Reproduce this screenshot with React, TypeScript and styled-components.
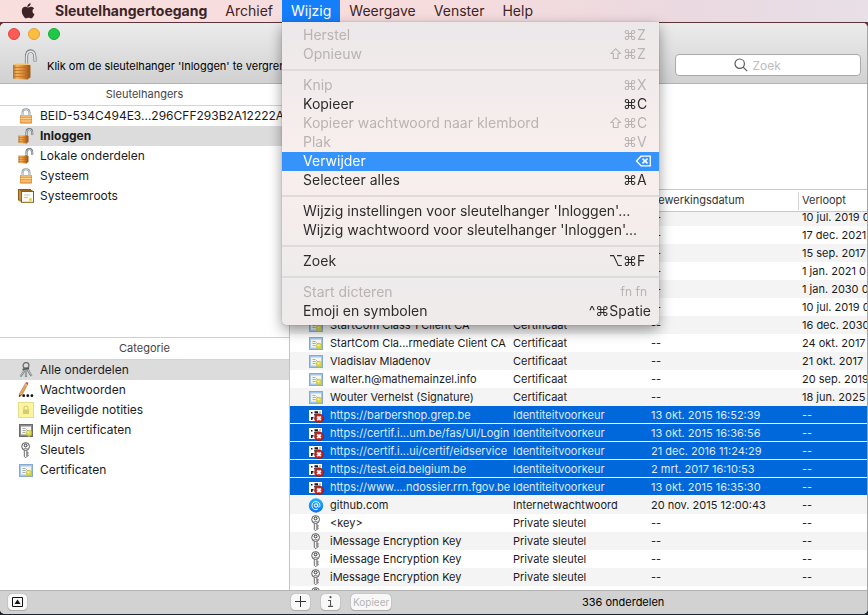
import React, { useLayoutEffect, useRef } from 'react';
import styled, { createGlobalStyle, css } from 'styled-components';

const GlobalStyle = createGlobalStyle`
  * { box-sizing: border-box; }
  html, body, #root { height: 100%; }
  body {
    margin: 0;
    background: linear-gradient(#5e3439, #1c252c);
    font-family: Inter, "Liberation Sans", sans-serif;
    font-size: 12px;
    color: #1b1b1b;
    overflow: hidden;
  }
  button, input { font: inherit; color: inherit; }
`;

/* ---------- layout ---------- */

const Desktop = styled.div`
  display: flex;
  flex-direction: column;
  height: 100%;
`;

const MenuBar = styled.nav`
  display: flex;
  align-items: stretch;
  height: 22px;
  margin-bottom: 1px;
  padding-left: 13px;
  background: linear-gradient(90deg, #f8dfde 0%, #f6dcdd 50%, #ead9e0 80%, #e8dfe7 100%);
  flex: none;
`;

const MenuSlot = styled.div`
  position: relative;
  display: flex;
`;

const MenuTitle = styled.button<{ $active?: boolean; $strong?: boolean }>`
  display: flex;
  align-items: center;
  padding: 0 9px;
  border: 0;
  font-size: 14px;
  line-height: 22px;
  white-space: nowrap;
  font-weight: ${p => (p.$strong ? 700 : 400)};
  color: ${p => (p.$active ? '#fff' : '#3c2427')};
  background: ${p => (p.$active ? '#157efb' : 'transparent')};
`;

const AppleTitle = styled(MenuTitle)`
  padding: 0 11px 1px 8px;
`;

const Menu = styled.div`
  position: absolute;
  z-index: 10;
  top: 22px;
  left: 0;
  width: 377px;
  padding: 4px 0;
  border-radius: 0 0 5px 5px;
  background: linear-gradient(#ece8e9 0%, #f2ebeb 20%, #f8efed 45%, #f5edec 65%, #eeebec 85%, #f0ebea 100%);
  box-shadow: 0 0 1px rgba(0, 0, 0, 0.5), 0 5px 14px rgba(0, 0, 0, 0.4);
`;

const MenuItem = styled.button<{ $selected?: boolean }>`
  display: flex;
  align-items: center;
  width: 100%;
  height: 19px;
  padding: 0 8px 2px 21px;
  border: 0;
  background: ${p => (p.$selected ? '#3693fc' : 'transparent')};
  color: ${p => (p.$selected ? '#fff' : '#2e2c2c')};
  font-size: 14px;
  line-height: 17px;
  white-space: nowrap;
  &:disabled { color: #b9b3b3; }
`;

const MenuLabel = styled.span`
  flex: 1;
  text-align: left;
`;

const Modifiers = styled.span`
  display: flex;
`;

const KeyCap = styled.span<{ $small?: boolean }>`
  display: flex;
  min-width: 14px;
  ${p => p.$small && css`
    font-size: 12px;
    padding-right: 4px;
  `}
`;

const MenuDivider = styled.hr`
  height: 2px;
  margin: 5px 0;
  border: 0;
  background: #e0dbdb;
`;

const Window = styled.main`
  display: flex;
  flex-direction: column;
  flex: 1;
  min-height: 0;
  margin-bottom: 1px;
  border-right: 1px solid #a5a5a5;
  border-radius: 5px;
  overflow: hidden;
  background: #fff;
`;

const TitleBar = styled.header`
  flex: none;
  padding: 5px 6px 0 8px;
  height: 61px;
  background: linear-gradient(#ececec, #d1d1d1);
  border-bottom: 1px solid #b3b3b3;
`;

const Lights = styled.div`
  display: flex;
  gap: 8px;
`;

const Light = styled.button<{ $color: string; $edge: string }>`
  width: 12px;
  height: 12px;
  padding: 0;
  border: 1px solid ${p => p.$edge};
  border-radius: 50%;
  background: ${p => p.$color};
`;

const ToolRow = styled.div`
  display: flex;
  align-items: center;
  height: 34px;
  margin-top: 8px;
`;

const LockButton = styled.button`
  display: flex;
  padding: 0;
  border: 0;
  background: none;
  margin: 0 7px 0 2px;
`;

const LockText = styled.span`
  flex: 1;
  padding-top: 2px;
  white-space: nowrap;
  font-size: 11px;
  color: #000;
`;

const SearchField = styled.label`
  display: flex;
  align-items: center;
  justify-content: center;
  gap: 5px;
  width: 186px;
  height: 22px;
  border: 1px solid #a9a9a9;
  border-radius: 4px;
  background: #fff;
`;

const SearchInput = styled.input`
  width: 50px;
  padding: 0;
  border: 0;
  outline: 0;
  background: none;
  font-size: 12px;
  &::placeholder { color: #bdbdbd; opacity: 1; }
`;

const Content = styled.div`
  display: grid;
  grid-template-columns: 290px minmax(0, 1fr);
  flex: 1;
  min-height: 0;
`;

const Sidebar = styled.aside`
  display: flex;
  flex-direction: column;
  border-right: 1px solid #c4c4c4;
`;

const Section = styled.section<{ $ruled?: boolean }>`
  flex: 1 1 0;
  ${p => p.$ruled && 'border-top: 1px solid #d0d0d0;'}
`;

const SectionTitle = styled.h2`
  margin: 0;
  height: 22px;
  border-bottom: 1px solid #d4d4d4;
  font-size: 11px;
  line-height: 21px;
  font-weight: 400;
  text-align: center;
  color: #444;
`;

const SideItem = styled.button<{ $selected?: boolean; $strong?: boolean }>`
  display: flex;
  align-items: center;
  gap: 6px;
  width: 100%;
  height: 20px;
  padding: 0 0 0 18px;
  border: 0;
  background: ${p => (p.$selected ? '#dcdcdc' : 'transparent')};
  font-size: 12px;
  line-height: 20px;
  font-weight: ${p => (p.$strong ? 700 : 400)};
  white-space: nowrap;
`;

const Main = styled.div`
  display: flex;
  flex-direction: column;
  min-height: 0;
`;

const DetailPane = styled.div`
  flex: none;
  height: 106px;
  border-bottom: 1px solid #c8c8c8;
`;

const ListPane = styled.div`
  flex: 1;
  min-height: 0;
  overflow: hidden;
`;

const Table = styled.table`
  width: 100%;
  table-layout: fixed;
  border-collapse: separate;
  border-spacing: 0;
  font-size: 11px;
`;

const Col = styled.col<{ $w?: number }>`
  ${p => p.$w && `width: ${p.$w}px;`}
`;

const HeadCell = styled.th`
  position: sticky;
  top: 0;
  z-index: 1;
  height: 22px;
  padding: 0 4px 2px;
  border-bottom: 1px solid #c8c8c8;
  background: linear-gradient(#d2d2d2, #d2d2d2) left center / 1px 18px no-repeat #fff;
  font-weight: 400;
  line-height: 18px;
  text-align: left;
  white-space: nowrap;
  color: #333;
`;

const Row = styled.tr<{ $selected?: boolean }>`
  &:nth-child(odd) { background: #f4f4f4; }
  &:nth-child(even) { background: #fff; }
  ${p => p.$selected && css`
    && { background: #0068da; color: #dfeafb; }
    && td { box-shadow: inset 0 -1px #fff; }
  `}
`;

const Cell = styled.td`
  height: 18px;
  padding: 0 4px;
  line-height: 18px;
  white-space: nowrap;
`;

const NameCell = styled(Cell)`
  padding: 0 0 0 18px;
`;

const NameFlex = styled.div`
  display: flex;
  align-items: center;
  gap: 6px;
  height: 18px;
`;

const IconBox = styled.span`
  display: flex;
  flex: none;
  width: 16px;
  height: 16px;
`;

const Footer = styled.footer`
  display: flex;
  align-items: center;
  flex: none;
  height: 24px;
  padding: 0 0 2px 8px;
  background: #d2d2d2;
  border-top: 1px solid #b3b3b3;
`;

const FootLeft = styled.div`
  width: 283px;
`;

const FootGroup = styled.div`
  display: flex;
  gap: 11px;
`;

const FootButton = styled.button`
  display: flex;
  align-items: center;
  justify-content: center;
  min-width: 19px;
  height: 16px;
  padding: 0 2px;
  border: 0;
  border-radius: 4px;
  background: #f8f8f8;
  box-shadow: 0 0 1px rgba(0, 0, 0, 0.45), 0 1px 1px rgba(0, 0, 0, 0.15);
  font-size: 10px;
  line-height: 16px;
  color: #333;
  &:disabled { color: #b4b4b4; }
`;

const Count = styled.span`
  flex: 1;
  padding-right: 12px;
  text-align: center;
  font-size: 11px;
  color: #000;
`;

/* ---------- icons ---------- */

const AppleLogo = () => (
  <svg width="14" height="16" viewBox="0 0 14 16" fill="#3c2427" aria-hidden="true">
    <path d="M9.6 0.2c.1 1-.3 1.900-.9 2.600-.6.700-1.500 1.200-2.400 1.100-.1-1 .4-1.900.9-2.500C7.800.7 8.800.2 9.600.2zM13.100 5.500c-1 .6-1.600 1.500-1.600 2.700 0 1.400.8 2.400 2 2.900-.3.900-.7 1.700-1.200 2.400-.6.900-1.200 1.800-2.200 1.800s-1.300-.6-2.500-.6-1.500.6-2.500.6-1.700-.9-2.300-1.800C1.600 12 .8 9.700.8 7.900c0-2.700 1.700-4.100 3.400-4.100 1.100 0 2 .7 2.700.7.600 0 1.700-.8 3-.8.500 0 2.200.1 3.200 1.800z" />
  </svg>
);

const Gold = ({ id }: { id: string }) => (
  <linearGradient id={id} x1="0" x2="1">
    <stop offset="0" stopColor="#b5702a" />
    <stop offset=".25" stopColor="#f2b35a" />
    <stop offset=".6" stopColor="#e2913a" />
    <stop offset="1" stopColor="#ae6420" />
  </linearGradient>
);

const BigLock = () => (
  <svg width="30" height="32" viewBox="0 0 30 32" aria-hidden="true">
    <defs><Gold id="big" /></defs>
    <path d="M16.500 17V8c0-8 8-8 8.300-1l.3 5.500" fill="none" stroke="#77828b" strokeWidth="3.200" />
    <path d="M16.500 17V8c0-7.500 8-7.500 8.300-1l.3 5" fill="none" stroke="#dfe5ea" strokeWidth="1.600" />
    <path d="M17 15.500l3.500.7V28.500L17 30.500z" fill="#a35f1c" />
    <path d="M3 15.800h14.800V30.600L3 29.800z" fill="url(#big)" />
    <path d="M3 18.500h14.800M3 21.500h14.800M3 24.500h14.800M3 27.500h14.800" stroke="#b87128" strokeWidth=".8" />
    <path d="M3 16 6 14.500h12.500l2 1.500z" fill="#f3c377" />
  </svg>
);

const ClosedLock = () => (
  <svg width="16" height="16" viewBox="0 0 16 16" aria-hidden="true">
    <path d="M4.500 8V4.500c0-4.500 7-4.500 7 0V8" fill="none" stroke="#8d979c" strokeWidth="2" />
    <path d="M4.500 8V4.500c0-4.300 7-4.300 7 0V8" fill="none" stroke="#dde2e4" strokeWidth=".8" />
    <rect x="2" y="7" width="12" height="8.500" rx=".8" fill="#c77a28" />
    <rect x="2.500" y="7.500" width="11" height="7.500" fill="#eda04a" />
    <path d="M2.500 8h11M2.500 10.500h11M2.500 13h11" stroke="#ffd391" strokeWidth="1" />
  </svg>
);

const OpenLock = () => (
  <svg width="16" height="16" viewBox="0 0 16 16" aria-hidden="true">
    <defs><Gold id="open" /></defs>
    <path d="M8.500 8V4.500c0-4.700 5.500-4.500 5.700-.5v2.800" fill="none" stroke="#66727b" strokeWidth="2.100" />
    <path d="M8.500 8V4.500c0-4.300 5.500-4.200 5.700-.5v2.400" fill="none" stroke="#dce3e8" strokeWidth=".8" />
    <path d="m8 7.200 2.500.8v6L8 15.500z" fill="#a05c1b" />
    <path d="M.5 7.500h8.300v8L.5 15z" fill="url(#open)" />
    <path d="M.5 9.500h8.300M.5 11.500h8.300M.5 13.500h8.300" stroke="#b06b24" strokeWidth=".5" />
  </svg>
);

const RootCerts = () => (
  <svg width="16" height="16" viewBox="0 0 16 16" aria-hidden="true">
    <rect x=".5" y="1.500" width="12" height="10.500" fill="#e7c078" stroke="#8e5c16" />
    <rect x="2" y="2.500" width="12" height="10.500" fill="#edc984" stroke="#99651c" />
    <rect x="3.500" y="3.500" width="12" height="10.800" fill="#fbfaf5" stroke="#8e5c16" />
    <path d="M6 7h6M6 9.500h4" stroke="#b8b8b8" strokeWidth=".8" />
    <circle cx="12.500" cy="11.500" r="1.600" fill="#dbd94a" />
  </svg>
);

const Cert = ({ frame, inner }: { frame: string; inner: string }) => (
  <svg width="16" height="16" viewBox="0 0 16 16" aria-hidden="true">
    <rect x="1.500" y="2.500" width="13" height="12" fill={inner} stroke={frame} />
    <rect x="3" y="4.500" width="10" height="8" fill="#f7f7f0" />
    <path d="M4.500 6.500h3M4.500 8.500h3l1-.8 1 .8h2M4.500 10.500h3" stroke="#858c90" strokeWidth=".7" fill="none" />
    <path d="m9.500 12.500.5 2.500 1-.8 1 .8.500-2.500z" fill="#c9c433" />
    <circle cx="11" cy="11" r="2.800" fill="#dcd944" stroke="#b5ad2b" strokeWidth=".4" />
    <circle cx="10.500" cy="10.300" r="1" fill="#f7f6a3" />
  </svg>
);

const BlueCert = () => <Cert frame="#86aace" inner="#a3c8ea" />;
const DarkCert = () => <Cert frame="#6b6b6b" inner="#8d8d8d" />;

const KeyIcon = () => (
  <svg width="16" height="16" viewBox="0 0 16 16" aria-hidden="true">
    <path d="M6.300 7.500h2.600v7l-1.200 1.300-1.400-1.300z" fill="#f4f4f4" stroke="#4b4b4b" strokeWidth=".8" />
    <path d="M9 10.300h1.200v1.200L9.200 12l1 .7V14H9" fill="none" stroke="#6f6f6f" strokeWidth=".8" />
    <circle cx="7.600" cy="4.500" r="3.900" fill="#f8f8f8" stroke="#4b4b4b" strokeWidth=".9" />
    <circle cx="7.600" cy="3.500" r="1.400" fill="#fff" stroke="#333" strokeWidth="1" />
    <path d="M5.500 6.500h4.200" stroke="#777" strokeWidth=".7" />
  </svg>
);

const KeyRing = () => (
  <svg width="16" height="16" viewBox="0 0 16 16" aria-hidden="true">
    <circle cx="8" cy="3.500" r="2.900" fill="none" stroke="#6d7375" strokeWidth="1.300" />
    <path d="M7.500 5.500 5.500 10l-3 4.500M8 5.500v9.500M9 5.500l2 4.500 2.500 4" stroke="#757c7f" strokeWidth="2.200" fill="none" />
    <path d="M7.500 6 5.500 10l-3 4M8 6v8.500M9 6l2 4 2.500 3.600" stroke="#c4c9cb" strokeWidth="1" fill="none" />
    <path d="M4.500 7.500 11 6.300" stroke="#4d5355" strokeWidth="1.400" />
  </svg>
);

const Pencil = () => (
  <svg width="16" height="16" viewBox="0 0 16 16" aria-hidden="true">
    <path d="M7.600 1.200 9.800 2 4 13l-3 1.600.6-3.200z" fill="#e8a45b" stroke="#9b5d2c" strokeWidth=".5" />
    <path d="m7.600 1.200 1-1.100 1.800.7-.6 1.500z" fill="#d5463f" />
    <path d="m7.200 2.200 2.100.9-.6 1.200-2.100-1z" fill="#c2c6c9" />
    <path d="m1.600 12.600-.8 2.200 2.200-.8z" fill="#222" />
    <g fill="#111"><circle cx="5.700" cy="13.700" r="1.400" /><circle cx="9.800" cy="13.700" r="1.400" /><circle cx="13.900" cy="13.700" r="1.400" /></g>
  </svg>
);

const Note = () => (
  <svg width="16" height="16" viewBox="0 0 16 16" aria-hidden="true">
    <rect x=".5" y=".5" width="15" height="15" fill="#fbf5a0" stroke="#e6dd88" />
    <path d="M6 8V6c0-2.600 4-2.600 4 0v2" fill="none" stroke="#d8d083" strokeWidth="1.200" />
    <rect x="5" y="7.500" width="6" height="4.500" fill="#d5cb6e" />
  </svg>
);

const Preference = () => (
  <svg width="16" height="16" viewBox="0 0 16 16" aria-hidden="true">
    <rect x="1" y="3" width="13" height="11" fill="#fff" />
    <path d="M3 5h1.500v1.500H3zM6.500 4.200h3.500v2.300H6.500zM6 7.300h3v1.200H6zM3 10h2.500v1.500H4.500V13H3zM11.500 4.500h1v1h-1z" fill="#16181c" />
    <circle cx="11" cy="11.300" r="4.500" fill="#c32420" stroke="#8d1512" strokeWidth=".6" />
    <path d="m9.200 9.500 3.600 3.600m0-3.600-3.600 3.600" stroke="#fff" strokeWidth="1.900" />
  </svg>
);

const AtIcon = () => (
  <svg width="16" height="16" viewBox="0 0 16 16" aria-hidden="true">
    <defs>
      <linearGradient id="at" x1="0" x2="0" y1="0" y2="1">
        <stop offset="0" stopColor="#1cb4fa" /><stop offset="1" stopColor="#1470ee" />
      </linearGradient>
    </defs>
    <circle cx="8" cy="8.500" r="7.200" fill="url(#at)" />
    <circle cx="8" cy="8.500" r="1.700" fill="none" stroke="#fff" strokeWidth="1" />
    <path d="M9.700 6.500V9c0 1.600 2.300 1.400 2.300-.5 0-5.200-8-5.200-8 0 0 3.900 3.600 5 6 3.400" fill="none" stroke="#fff" strokeWidth=".9" />
  </svg>
);

const DeleteKey = () => (
  <svg width="16" height="12" viewBox="0 0 16 12" fill="none" stroke="#fff" strokeWidth="1.300" aria-hidden="true">
    <path d="M6 1.200h9.300v9.600H6L1.500 6z" />
    <path d="m7.500 3.600 5 4.800m0-4.800-5 4.800" strokeWidth="1.600" />
  </svg>
);

const Magnifier = () => (
  <svg width="14" height="14" viewBox="0 0 14 14" fill="none" stroke="#5b5b5b" strokeWidth="1.200" aria-hidden="true">
    <circle cx="5.700" cy="5.700" r="4.700" />
    <path d="m9.200 9.200 4 4" />
  </svg>
);

const PanelIcon = () => (
  <svg width="11" height="10" viewBox="0 0 11 10" aria-hidden="true">
    <path d="M.5.500h10v9H.5z" fill="none" stroke="#111" />
    <path d="M5.500 2.500 8.500 7h-6z" fill="#111" />
  </svg>
);

const PlusIcon = () => (
  <svg width="11" height="11" viewBox="0 0 11 11" aria-hidden="true">
    <path d="M5.500 0v11M0 5.500h11" stroke="#333" />
  </svg>
);

const InfoIcon = () => (
  <svg width="7" height="11" viewBox="0 0 7 11" aria-hidden="true">
    <circle cx="3.500" cy="1.200" r="1.100" fill="#555" />
    <path d="M1 4.500h2.500V10M1 10.400h5" fill="none" stroke="#555" strokeWidth="1.100" />
  </svg>
);

/* ---------- data ---------- */

type Entry = { label: string; mods?: string; keyCap?: React.ReactNode; small?: boolean; off?: boolean; selected?: boolean };

const menuGroups: Entry[][] = [
  [
    { label: 'Herstel', mods: '⌘', keyCap: 'Z', off: true },
    { label: 'Opnieuw', mods: '⇧⌘', keyCap: 'Z', off: true },
  ],
  [
    { label: 'Knip', mods: '⌘', keyCap: 'X', off: true },
    { label: 'Kopieer', mods: '⌘', keyCap: 'C' },
    { label: 'Kopieer wachtwoord naar klembord', mods: '⇧⌘', keyCap: 'C', off: true },
    { label: 'Plak', mods: '⌘', keyCap: 'V', off: true },
    { label: 'Verwijder', keyCap: <DeleteKey />, selected: true },
    { label: 'Selecteer alles', mods: '⌘', keyCap: 'A' },
  ],
  [
    { label: "Wijzig instellingen voor sleutelhanger 'Inloggen'..." },
    { label: "Wijzig wachtwoord voor sleutelhanger 'Inloggen'..." },
  ],
  [{ label: 'Zoek', mods: '⌥⌘', keyCap: 'F' }],
  [
    { label: 'Start dicteren', keyCap: 'fn fn', small: true, off: true },
    { label: 'Emoji en symbolen', mods: '^⌘', keyCap: 'Spatie' },
  ],
];

const keychains = [
  { label: 'BEID-534C494E3...296CFF293B2A12222A', Icon: ClosedLock },
  { label: 'Inloggen', Icon: OpenLock, selected: true, strong: true },
  { label: 'Lokale onderdelen', Icon: OpenLock },
  { label: 'Systeem', Icon: ClosedLock },
  { label: 'Systeemroots', Icon: RootCerts },
];

const categories = [
  { label: 'Alle onderdelen', Icon: KeyRing, selected: true },
  { label: 'Wachtwoorden', Icon: Pencil },
  { label: 'Beveiligde notities', Icon: Note },
  { label: 'Mijn certificaten', Icon: DarkCert },
  { label: 'Sleutels', Icon: KeyIcon },
  { label: 'Certificaten', Icon: BlueCert },
];

type Item = { Icon?: () => React.ReactElement; name?: string; kind?: string; changed: string; expires: string; selected?: boolean };

const cert = (name: string, expires: string): Item => ({ Icon: BlueCert, name, kind: 'Certificaat', changed: '--', expires });
const covered = (expires: string): Item => ({ changed: '--', expires });
const pref = (name: string, changed: string): Item => ({ Icon: Preference, name, kind: 'Identiteitvoorkeur', changed, expires: '--', selected: true });
const privateKey = (name: string): Item => ({ Icon: KeyIcon, name, kind: 'Private sleutel', changed: '--', expires: '--' });

const items: Item[] = [
  covered('10 jul. 2019 0'),
  covered('17 dec. 2021'),
  covered('15 sep. 2017'),
  covered('1 jan. 2021 0'),
  covered('1 jan. 2030 0'),
  covered('10 jul. 2019 0'),
  cert('StartCom Class 1 Client CA', '16 dec. 2030'),
  cert('StartCom Cla...rmediate Client CA', '24 okt. 2017'),
  cert('Vladislav Mladenov', '21 okt. 2017'),
  cert('walter.h@mathemainzel.info', '20 sep. 2019'),
  cert('Wouter Verhelst (Signature)', '18 jun. 2025'),
  pref('https://barbershop.grep.be', '13 okt. 2015 16:52:39'),
  pref('https://certif.i...um.be/fas/UI/Login', '13 okt. 2015 16:36:56'),
  pref('https://certif.i...ui/certif/eidservice', '21 dec. 2016 11:24:29'),
  pref('https://test.eid.belgium.be', '2 mrt. 2017 16:10:53'),
  pref('https://www....ndossier.rrn.fgov.be', '13 okt. 2015 16:35:30'),
  { Icon: AtIcon, name: 'github.com', kind: 'Internetwachtwoord', changed: '20 nov. 2015 12:00:43', expires: '--' },
  privateKey('<key>'),
  privateKey('iMessage Encryption Key'),
  privateKey('iMessage Encryption Key'),
  privateKey('iMessage Encryption Key'),
  { Icon: KeyIcon, changed: '', expires: '' },
];

/* ---------- view ---------- */

const EditMenu = () => (
  <Menu role="menu">
    {menuGroups.map((group, g) => (
      <React.Fragment key={g}>
        {g > 0 && <MenuDivider />}
        {group.map(e => (
          <MenuItem key={e.label} role="menuitem" disabled={e.off} $selected={e.selected}>
            <MenuLabel>{e.label}</MenuLabel>
            {e.mods && <Modifiers>{e.mods}</Modifiers>}
            {e.keyCap && <KeyCap $small={e.small}>{e.keyCap}</KeyCap>}
          </MenuItem>
        ))}
      </React.Fragment>
    ))}
  </Menu>
);

const ItemTable = () => {
  const pane = useRef<HTMLDivElement>(null);
  useLayoutEffect(() => {
    if (pane.current) pane.current.scrollTop = 4;
  }, []);
  return (
    <ListPane ref={pane}>
      <Table>
        <colgroup>
          <Col $w={219} />
          <Col $w={138} />
          <Col $w={151} />
          <Col />
        </colgroup>
        <thead>
          <tr>
            <HeadCell aria-label="Item" />
            <HeadCell aria-label="Type" />
            <HeadCell>Bewerkingsdatum</HeadCell>
            <HeadCell>Verloopt</HeadCell>
          </tr>
        </thead>
        <tbody>
          {items.map((it, i) => (
            <Row key={i} $selected={it.selected}>
              <NameCell>
                <NameFlex>
                  {it.Icon && <IconBox><it.Icon /></IconBox>}
                  {it.name}
                </NameFlex>
              </NameCell>
              <Cell>{it.kind}</Cell>
              <Cell>{it.changed}</Cell>
              <Cell>{it.expires}</Cell>
            </Row>
          ))}
        </tbody>
      </Table>
    </ListPane>
  );
};

export default function App() {
  return (
    <>
      <GlobalStyle />
      <Desktop>
        <MenuBar>
          <AppleTitle aria-label="Apple"><AppleLogo /></AppleTitle>
          <MenuTitle $strong>Sleutelhangertoegang</MenuTitle>
          <MenuTitle>Archief</MenuTitle>
          <MenuSlot>
            <MenuTitle $active>Wijzig</MenuTitle>
            <EditMenu />
          </MenuSlot>
          <MenuTitle>Weergave</MenuTitle>
          <MenuTitle>Venster</MenuTitle>
          <MenuTitle>Help</MenuTitle>
        </MenuBar>
        <Window>
          <TitleBar>
            <Lights>
              <Light $color="#fc5b57" $edge="#e2463f" aria-label="Sluit" />
              <Light $color="#fdbe40" $edge="#e0a135" aria-label="Minimaliseer" />
              <Light $color="#20c84a" $edge="#17ab35" aria-label="Vergroot" />
            </Lights>
            <ToolRow>
              <LockButton aria-label="Vergrendel"><BigLock /></LockButton>
              <LockText>Klik om de sleutelhanger 'Inloggen' te vergrendelen</LockText>
              <SearchField>
                <Magnifier />
                <SearchInput placeholder="Zoek" aria-label="Zoek" />
              </SearchField>
            </ToolRow>
          </TitleBar>
          <Content>
            <Sidebar>
              <Section>
                <SectionTitle>Sleutelhangers</SectionTitle>
                {keychains.map(k => (
                  <SideItem key={k.label} $selected={k.selected} $strong={k.strong}>
                    <IconBox><k.Icon /></IconBox>{k.label}
                  </SideItem>
                ))}
              </Section>
              <Section $ruled>
                <SectionTitle>Categorie</SectionTitle>
                {categories.map(c => (
                  <SideItem key={c.label} $selected={c.selected}>
                    <IconBox><c.Icon /></IconBox>{c.label}
                  </SideItem>
                ))}
              </Section>
            </Sidebar>
            <Main>
              <DetailPane />
              <ItemTable />
            </Main>
          </Content>
          <Footer>
            <FootLeft><FootButton aria-label="Toon paneel"><PanelIcon /></FootButton></FootLeft>
            <FootGroup>
              <FootButton aria-label="Voeg toe"><PlusIcon /></FootButton>
              <FootButton aria-label="Info"><InfoIcon /></FootButton>
              <FootButton disabled>Kopieer</FootButton>
            </FootGroup>
            <Count>336 onderdelen</Count>
          </Footer>
        </Window>
      </Desktop>
    </>
  );
}
